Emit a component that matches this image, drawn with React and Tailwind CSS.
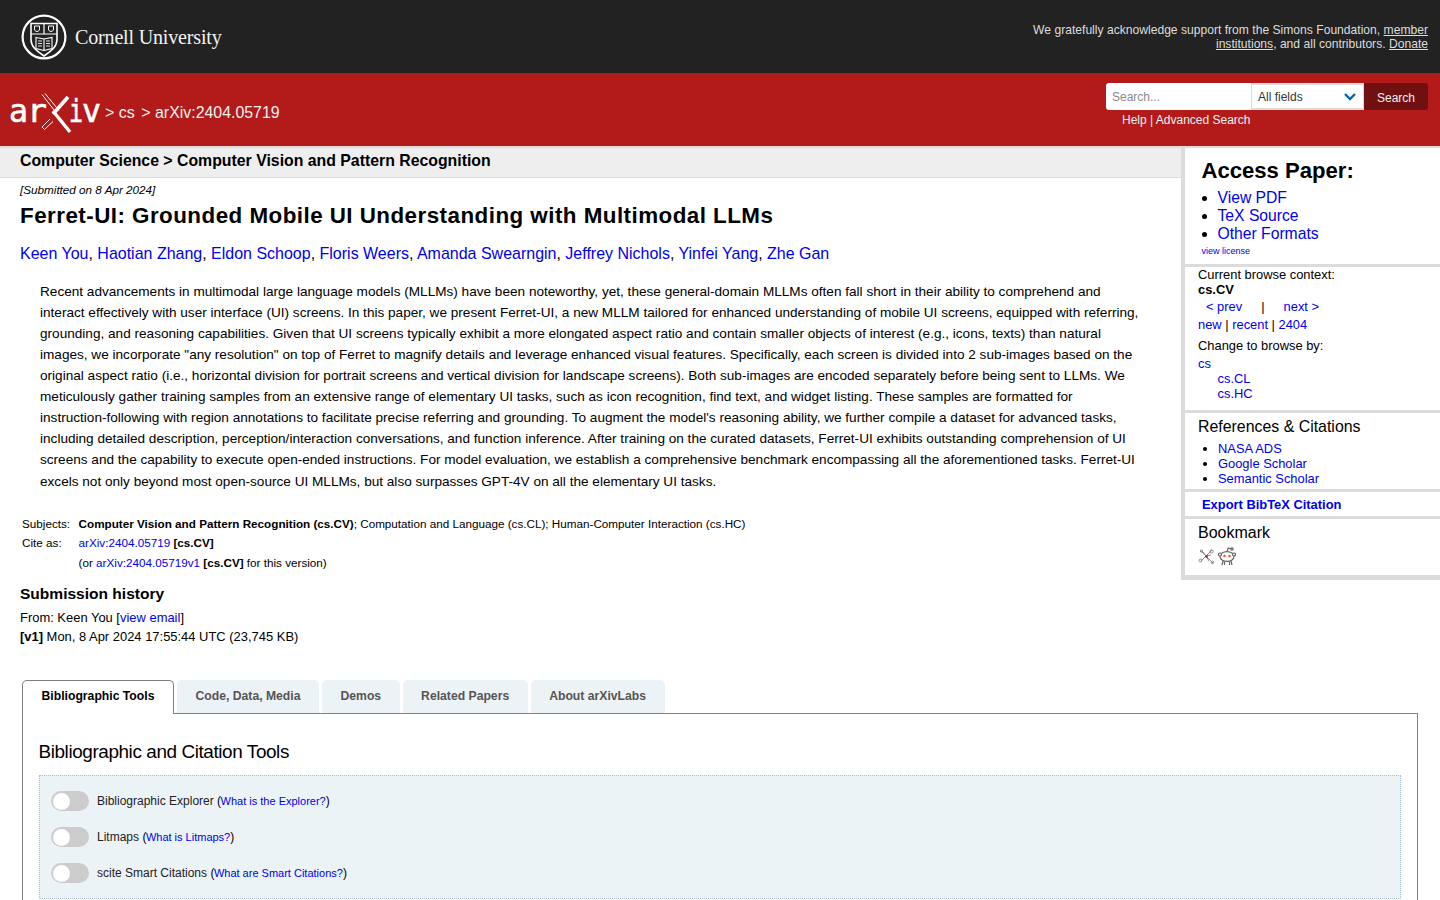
import { Fragment } from "react";

const authors = [
  "Keen You",
  "Haotian Zhang",
  "Eldon Schoop",
  "Floris Weers",
  "Amanda Swearngin",
  "Jeffrey Nichols",
  "Yinfei Yang",
  "Zhe Gan",
];

const abstractText = `Recent advancements in multimodal large language models (MLLMs) have been noteworthy, yet, these general-domain MLLMs often fall short in their ability to comprehend and interact effectively with user interface (UI) screens. In this paper, we present Ferret-UI, a new MLLM tailored for enhanced understanding of mobile UI screens, equipped with referring, grounding, and reasoning capabilities. Given that UI screens typically exhibit a more elongated aspect ratio and contain smaller objects of interest (e.g., icons, texts) than natural images, we incorporate "any resolution" on top of Ferret to magnify details and leverage enhanced visual features. Specifically, each screen is divided into 2 sub-images based on the original aspect ratio (i.e., horizontal division for portrait screens and vertical division for landscape screens). Both sub-images are encoded separately before being sent to LLMs. We meticulously gather training samples from an extensive range of elementary UI tasks, such as icon recognition, find text, and widget listing. These samples are formatted for instruction-following with region annotations to facilitate precise referring and grounding. To augment the model's reasoning ability, we further compile a dataset for advanced tasks, including detailed description, perception/interaction conversations, and function inference. After training on the curated datasets, Ferret-UI exhibits outstanding comprehension of UI screens and the capability to execute open-ended instructions. For model evaluation, we establish a comprehensive benchmark encompassing all the aforementioned tasks. Ferret-UI excels not only beyond most open-source UI MLLMs, but also surpasses GPT-4V on all the elementary UI tasks.`;

const tabs = ["Code, Data, Media", "Demos", "Related Papers", "About arXivLabs"];

const tools = [
  { name: "Bibliographic Explorer", help: "What is the Explorer?" },
  { name: "Litmaps", help: "What is Litmaps?" },
  { name: "scite Smart Citations", help: "What are Smart Citations?" },
];

const A = ({ className = "", children }) => (
  <a href="#" className={`text-[#0000ee] ${className}`}>
    {children}
  </a>
);

const CornellLogo = () => (
  <div className="flex items-center">
    <svg width="46" height="46" viewBox="0 0 46 46" fill="none" stroke="#fff">
      <circle cx="23" cy="23" r="21.4" strokeWidth="2.2" />
      <path d="M10 9.5h26v16c0 7-5 11-13 16.5c-8-5.5-13-9.5-13-16.5z" strokeWidth="1.6" />
      <path d="M10 20h26M23 9.5v10.5" strokeWidth="1.2" />
      <path d="M13.5 12v3c0 1.5 1.2 2.5 2.5 2.5s2.5-1 2.5-2.5v-3zM27.5 12v3c0 1.5 1.2 2.5 2.5 2.5s2.5-1 2.5-2.5v-3z" strokeWidth="1" />
      <path d="M15 23.5l8 1.5l8-1.5v11l-8 2l-8-2zM23 25v11.5" strokeWidth="1.1" />
      <path d="M17 27h4M17 29.5h4M17 32h4M25 27h4M25 29.5h4M25 32h4" strokeWidth="0.9" />
    </svg>
    <span className="ml-[8px] pt-[2px] font-['Liberation_Serif',serif] text-[20.1px] leading-none tracking-[-0.2px] text-[#f2f2f2]">
      Cornell University
    </span>
  </div>
);

const ArxivLogo = () => (
  <svg width="92" height="42" viewBox="0 0 92 42" className="shrink-0">
    <g fill="#fff" stroke="#fff" strokeWidth="0.6" fontFamily="'DejaVu Sans Mono', monospace" fontSize="32">
      <text x="0" y="30" textLength="19" lengthAdjust="spacingAndGlyphs">a</text>
      <text x="18" y="30" textLength="20" lengthAdjust="spacingAndGlyphs">r</text>
      <text x="60" y="30" textLength="14" lengthAdjust="spacingAndGlyphs">i</text>
      <text x="73" y="30" textLength="19" lengthAdjust="spacingAndGlyphs">v</text>
    </g>
    <path d="M33 2.5l14 18M36 1.5l14 17" stroke="#fff" strokeWidth="1" fill="none" />
    <path d="M44 29.5l-8.5 8l-2.5-2.5l8-8" stroke="#fff" strokeWidth="1" fill="none" />
    <path d="M44 22L59 5" stroke="#fff" strokeWidth="3.6" fill="none" />
    <path d="M44 19l17 21" stroke="#fff" strokeWidth="3.4" fill="none" />
  </svg>
);

const SearchBox = () => (
  <div className="flex flex-col">
    <div className="flex h-[27px] text-[12px]">
      <div className="flex w-[145px] items-center rounded-l-[3px] bg-white pl-[6px] text-[#8a8a8a]">Search...</div>
      <div className="flex w-[113px] items-center justify-between border-x border-y-2 border-[#dbdbdb] bg-white pl-[6px] pr-[7px] text-[#363636]">
        All fields
        <svg width="12" height="8" viewBox="0 0 12 8" fill="none" stroke="#0068ac" strokeWidth="2.4">
          <path d="M1 1l5 5l5-5" />
        </svg>
      </div>
      <div className="flex w-[64px] items-center justify-center rounded-r-[3px] bg-[#701010] pt-[2px] text-[#f0f0f0]">Search</div>
    </div>
    <div className="mt-[3px] pl-[16px] text-[12px] leading-[14px] text-[#f0f0f0]">Help | Advanced Search</div>
  </div>
);

const Box = ({ className = "", children }) => (
  <div className={`border-[#dcdcdc] ${className}`}>{children}</div>
);

const Sidebar = () => (
  <aside className="w-[259px] shrink-0 border-l-[4px] border-[#dcdcdc]">
    <Box className="h-[119px] border-b-[3px] pl-[16.5px] pt-[10px]">
      <h2 className="text-[22.1px] font-bold leading-[26px] text-black">Access Paper:</h2>
      <ul className="mt-[5px] list-disc pl-[16px] text-[15.7px] leading-[18px] marker:text-black">
        <li><A>View PDF</A></li>
        <li><A>TeX Source</A></li>
        <li><A>Other Formats</A></li>
      </ul>
      <div className="mt-[1px] text-[9px] leading-[14px]"><A>view license</A></div>
    </Box>
    <Box className="h-[146px] border-b-[3px] pl-[13px] text-[12.9px] leading-[15px] text-black">
      <div>Current browse context:</div>
      <div className="font-bold">cs.CV</div>
      <div className="mt-[2px] flex leading-[15px]">
        <A className="ml-[8px]">&lt; prev</A>
        <span className="ml-[19px]">|</span>
        <A className="ml-[19px]">next &gt;</A>
      </div>
      <div className="mt-[3px]">
        <A>new</A> | <A>recent</A> | <A>2404</A>
      </div>
      <div className="mt-[6px]">Change to browse by:</div>
      <div className="mt-[3px]"><A>cs</A></div>
      <div className="pl-[19.5px]"><A>cs.CL</A></div>
      <div className="pl-[19.5px]"><A>cs.HC</A></div>
    </Box>
    <Box className="h-[79px] border-b-[3px] pl-[13px] pt-[4px]">
      <h3 className="text-[15.9px] leading-[20px] text-black">References &amp; Citations</h3>
      <ul className="mt-[4px] list-disc pl-[20px] text-[12.9px] leading-[15px] marker:text-black">
        <li><A>NASA ADS</A></li>
        <li><A>Google Scholar</A></li>
        <li><A>Semantic Scholar</A></li>
      </ul>
    </Box>
    <Box className="h-[27px] border-b-[3px] pl-[17px] pt-[4px] text-[12.9px] font-bold leading-[18px]">
      <A>Export BibTeX Citation</A>
    </Box>
    <Box className="h-[61px] border-b-[5px] pl-[13px] pt-[4px]">
      <h3 className="text-[16px] leading-[20px] text-black">Bookmark</h3>
      <div className="ml-[-0.5px] mt-[4px] flex items-center gap-[3px]">
        <svg width="17" height="17" viewBox="0 0 17 17" fill="none" stroke="#8a8a8a" strokeWidth="1">
          <path d="M2 2l13 13M14 2L3 13M8 8l-5 5M8 8l-3-4M8 8l5-1M8 8l3 5" />
          <circle cx="2.5" cy="12.5" r="1.4" />
          <circle cx="13.5" cy="3.5" r="1.6" />
          <circle cx="3.5" cy="3" r="1.2" />
          <circle cx="14.5" cy="14.5" r="1.2" />
          <circle cx="8.5" cy="8.5" r="1.4" fill="#8f3f3f" stroke="none" />
        </svg>
        <svg width="18" height="19" viewBox="0 0 18 19" fill="none" stroke="#666" strokeWidth="1.2">
          <ellipse cx="9" cy="9.5" rx="7" ry="4.8" fill="#fff" />
          <circle cx="2" cy="7.5" r="1.5" fill="#fff" />
          <circle cx="16" cy="7.5" r="1.5" fill="#fff" />
          <path d="M9 4.5l1.2-3.5l3.3 1" />
          <circle cx="14" cy="2" r="1.2" />
          <path d="M5 14l-1 4M13 14l1 4M6.5 15v3M11.5 15v3" />
          <circle cx="6.5" cy="9" r="1.2" fill="#ff4500" stroke="none" />
          <circle cx="11.5" cy="9" r="1.2" fill="#ff4500" stroke="none" />
        </svg>
      </div>
    </Box>
  </aside>
);

const Toggle = () => (
  <div className="relative h-[20px] w-[38px] rounded-full bg-[#cccccc]">
    <div className="absolute left-[1.5px] top-[1.5px] h-[17px] w-[17px] rounded-full bg-white" />
  </div>
);

const Tabs = () => (
  <div className="px-[22px] pt-[34px]">
    <div className="relative z-10 flex items-start gap-[3px] text-[12.2px] font-bold">
      <div className="-mb-px flex h-[34px] w-[152px] items-center justify-center rounded-t-[5px] border border-b-0 border-[#808080] bg-white pb-[3px] text-black">
        Bibliographic Tools
      </div>
      {tabs.map((t) => (
        <div key={t} className="flex h-[33px] items-center rounded-t-[5px] bg-[#ecf3f7] px-[18.5px] pb-[2px] text-[#555555]">
          {t}
        </div>
      ))}
    </div>
    <div className="border border-[#808080] px-[16px] pb-[20px] pt-[26px]">
      <h2 className="ml-[-0.5px] text-[18.9px] leading-[24px] tracking-[-0.4px] text-black">Bibliographic and Citation Tools</h2>
      <div className="mt-[11px] flex flex-col gap-[16px] border border-dotted border-[#a9c3d6] bg-[#ecf3f7] px-[11px] pb-[15px] pt-[15px]">
        {tools.map((t) => (
          <div key={t.name} className="flex h-[20px] items-center gap-[8px] text-[12px] text-[#222222]">
            <Toggle />
            <span>
              {t.name} <span className="text-black">(</span><A className="ml-[-0.5px] text-[11px]">{t.help}</A><span className="text-black">)</span>
            </span>
          </div>
        ))}
      </div>
    </div>
  </div>
);

export default function App() {
  return (
    <div className="h-[900px] overflow-hidden bg-white font-['Liberation_Sans',Arial,sans-serif] text-black">
      <header className="flex h-[73px] items-center justify-between bg-[#222222] pl-[21px] pr-[12px]">
        <CornellLogo />
        <p className="w-[410px] text-right text-[12.11px] leading-[14px] text-[#dddddd]">
          We gratefully acknowledge support from the Simons Foundation, <u>member institutions</u>, and all contributors. <u>Donate</u>
        </p>
      </header>

      <div className="flex h-[73px] justify-between bg-[#b31b1b] pl-[9px] pr-[12px]">
        <div className="flex items-center gap-[4px] pt-[6px] text-[16px] text-[#f0f0f0]">
          <ArxivLogo />
          <span>&gt; cs <span className="ml-[2px]">&gt;</span> <span className="text-[15.9px]">arXiv:2404.05719</span></span>
        </div>
        <div className="pt-[10px]">
          <SearchBox />
        </div>
      </div>

      <div className="flex items-start border-t-2 border-[#dcdcdc]">
        <main className="min-w-0 flex-1">
          <div className="h-[30px] border-b border-[#dcdcdc] bg-[#eeeeee] pl-[20px] text-[15.83px] font-bold leading-[26px]">
            Computer Science &gt; Computer Vision and Pattern Recognition
          </div>
          <div className="pl-[20px] pr-[20px]">
            <div className="pt-[4px] text-[11.7px] italic leading-[15px]">[Submitted on 8 Apr 2024]</div>
            <h1 className="mt-[4px] text-[22.4px] font-bold leading-[29px] tracking-[0.46px]">
              Ferret-UI: Grounded Mobile UI Understanding with Multimodal LLMs
            </h1>
            <div className="mt-[14px] text-[15.99px] leading-[20px]">
              {authors.map((a, i) => (
                <Fragment key={a}>
                  <A>{a}</A>
                  {i < authors.length - 1 ? ", " : ""}
                </Fragment>
              ))}
            </div>
            <p className="ml-[20px] mr-[20px] mt-[16.8px] text-[13.6px] leading-[21.08px]">{abstractText}</p>

            <table className="ml-[2px] mt-[22.2px] text-[11.7px] leading-[19.5px]">
              <tbody>
                <tr>
                  <td className="pr-[8.5px] align-top">Subjects:</td>
                  <td>
                    <b>Computer Vision and Pattern Recognition (cs.CV)</b>; Computation and Language (cs.CL); Human-Computer Interaction (cs.HC)
                  </td>
                </tr>
                <tr>
                  <td className="pr-[8.5px] align-top">Cite as:</td>
                  <td><A>arXiv:2404.05719</A> <b>[cs.CV]</b></td>
                </tr>
                <tr>
                  <td />
                  <td>(or <A>arXiv:2404.05719v1</A> <b>[cs.CV]</b> for this version)</td>
                </tr>
              </tbody>
            </table>

            <h2 className="mt-[12px] text-[15.54px] font-bold leading-[20px]">Submission history</h2>
            <div className="mt-[4px] text-[12.95px] leading-[19px]">
              From: Keen You [<A>view email</A>]
              <br />
              <b>[v1]</b> Mon, 8 Apr 2024 17:55:44 UTC (23,745 KB)
            </div>
          </div>
        </main>
        <Sidebar />
      </div>

      <Tabs />
    </div>
  );
}
